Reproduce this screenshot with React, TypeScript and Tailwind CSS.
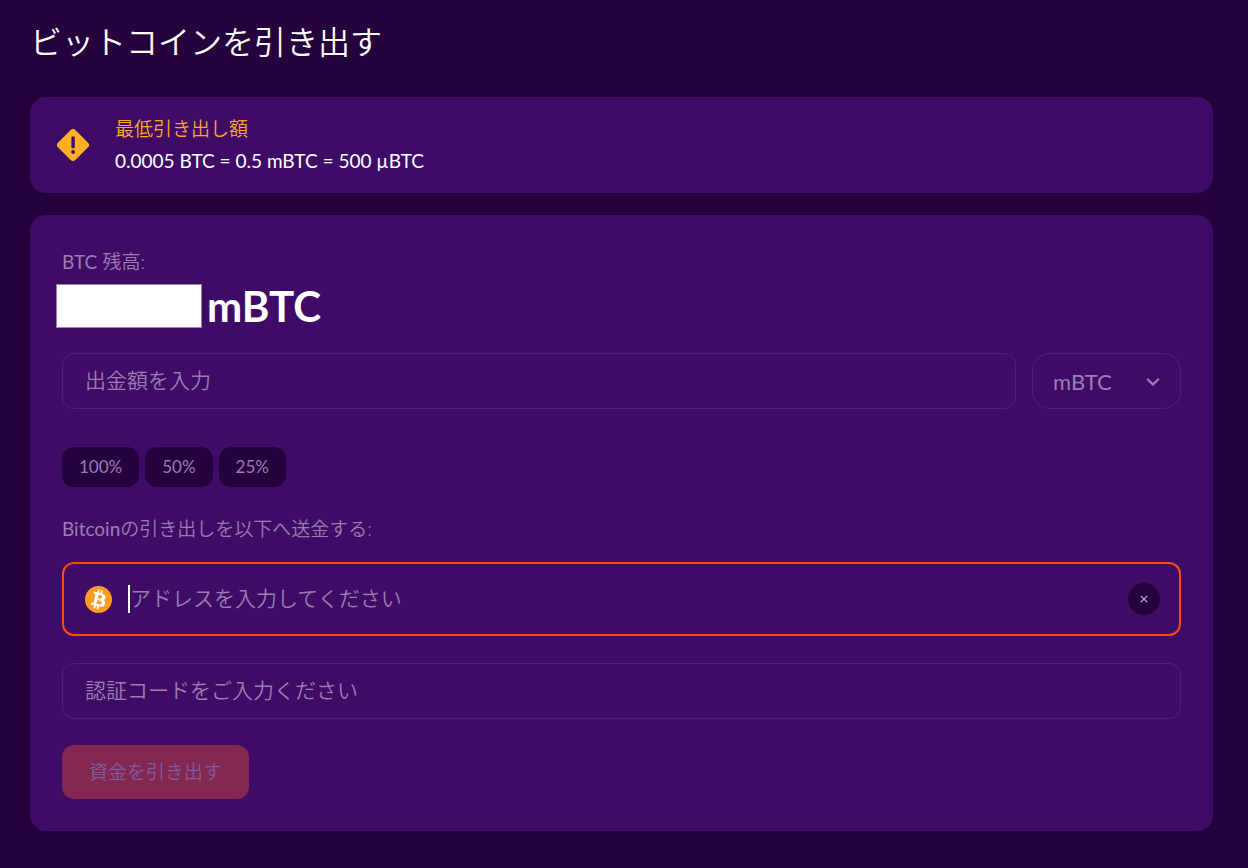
import { useState } from "react";

const percentages = ["100%", "50%", "25%"];

function WarningIcon() {
  return (
    <svg className="size-8 shrink-0" viewBox="0 0 32 32" aria-hidden="true">
      <path
        fill="#ffb020"
        d="M13.7 1a3.2 3.2 0 0 1 4.6 0L31 13.7a3.2 3.2 0 0 1 0 4.6L18.3 31a3.2 3.2 0 0 1-4.6 0L1 18.3a3.2 3.2 0 0 1 0-4.6Z"
      />
      <rect x="14.4" y="7.5" width="3.4" height="11.8" rx="1.2" fill="#3e0c66" />
      <circle cx="16.1" cy="23" r="1.9" fill="#3e0c66" />
    </svg>
  );
}

function BitcoinIcon() {
  return (
    <svg className="size-[27px] shrink-0" viewBox="0 0 32 32" aria-hidden="true">
      <circle cx="16" cy="16" r="16" fill="#ff9b21" />
      <path
        fill="#fff"
        transform="translate(-2.9 -2.9) scale(1.18)"
        d="M23.189 14.02c.314-2.096-1.283-3.223-3.465-3.975l.708-2.84-1.728-.43-.69 2.765c-.454-.114-.92-.22-1.385-.326l.695-2.783L15.596 6l-.708 2.839c-.376-.086-.746-.17-1.104-.26l.002-.009-2.384-.595-.46 1.846s1.283.294 1.256.312c.7.175.826.638.805 1.006l-.806 3.235c.048.012.11.03.18.057l-.183-.045-1.13 4.532c-.086.212-.303.531-.793.41.018.025-1.256-.313-1.256-.313l-.858 1.978 2.25.561c.418.105.828.215 1.231.318l-.715 2.872 1.727.43.708-2.84c.472.127.93.245 1.378.357l-.706 2.828 1.728.43.715-2.866c2.948.558 5.164.333 6.097-2.333.752-2.146-.037-3.385-1.588-4.192 1.13-.26 1.98-1.003 2.207-2.538zm-3.95 5.538c-.533 2.147-4.148.986-5.32.695l.95-3.805c1.172.293 4.929.872 4.37 3.11zm.535-5.569c-.487 1.953-3.495.96-4.47.717l.86-3.45c.975.243 4.118.696 3.61 2.733z"
      />
    </svg>
  );
}

export default function App() {
  const [amount, setAmount] = useState("");
  const [address, setAddress] = useState("");
  const [code, setCode] = useState("");

  return (
    <main className="min-h-screen bg-[#25023d] pt-4 pr-[35px] pb-9 pl-[30px] font-['Lato','Noto_Sans_CJK_JP',sans-serif] text-white">
      <h1 className="text-[32px] leading-[52px] font-[350]">ビットコインを引き出す</h1>

      <section className="mt-[29px] flex h-24 items-center gap-[26px] rounded-2xl bg-[#3e0c66] px-[27px]">
        <WarningIcon />
        <div className="text-[19px] leading-8">
          <h2 className="font-[350] text-[#ffa723]">最低引き出し額</h2>
          <p>0.0005 BTC = 0.5 mBTC = 500 µBTC</p>
        </div>
      </section>

      <form
        className="mt-[22px] rounded-2xl bg-[#3e0c66] p-8 text-[#9d7cb3]"
        onSubmit={(event) => event.preventDefault()}
      >
        <p className="text-[19px] leading-[30px] font-[350]">
          <span className="font-normal">BTC</span> 残高:
        </p>
        <div className="-ml-1.5 mt-[7px] flex h-11 items-center gap-[5px] text-[42px] font-bold text-white">
          <span className="h-11 w-[146px] border border-[#9d7cb3] bg-white" />
          <span>mBTC</span>
        </div>

        <div className="mt-[25px] flex gap-4">
          <input
            aria-label="出金額を入力"
            placeholder="出金額を入力"
            value={amount}
            onChange={(event) => setAmount(event.target.value)}
            className="h-14 min-w-0 flex-1 rounded-xl border border-[#531d80] bg-transparent px-[22px] pb-1 text-[21px] font-[350] outline-none placeholder:text-[#9d7cb3]"
          />
          <div className="relative w-[149px]">
            <select
              aria-label="mBTC"
              className="h-14 w-full appearance-none rounded-[18px] border border-[#531d80] bg-transparent px-5 text-[22px] outline-none"
            >
              <option>mBTC</option>
            </select>
            <svg
              className="pointer-events-none absolute top-6 right-[21px] h-2.5 w-3.5"
              viewBox="0 0 14 10"
              fill="none"
              stroke="currentColor"
              strokeWidth="2.2"
              aria-hidden="true"
            >
              <path d="m1.2 1.8 5.8 5.8 5.8-5.8" />
            </svg>
          </div>
        </div>

        <div className="mt-[38px] flex gap-1.5">
          {percentages.map((label) => (
            <button
              key={label}
              type="button"
              className="h-10 rounded-xl bg-[#25023d] px-[17px] text-[17px]"
            >
              {label}
            </button>
          ))}
        </div>

        <label htmlFor="address" className="mt-[27px] block text-[19px] leading-[30px] font-[350]">
          <span className="font-normal">Bitcoin</span>の引き出しを以下へ送金する:
        </label>
        <div className="mt-[18px] flex h-[74px] items-center rounded-xl border-2 border-[#ff4d12] pr-[19px] pl-[21px]">
          <BitcoinIcon />
          <span className="ml-4 h-7 w-0.5 bg-white" />
          <input
            id="address"
            placeholder="アドレスを入力してください"
            value={address}
            onChange={(event) => setAddress(event.target.value)}
            className="h-full min-w-0 flex-1 bg-transparent pb-1 text-[21px] font-[350] outline-none placeholder:text-[#9d7cb3]"
          />
          <button
            type="button"
            aria-label="クリア"
            onClick={() => setAddress("")}
            className="grid size-8 place-items-center rounded-full bg-[#25023d] text-[#c9b3d8]"
          >
            <svg className="size-2" viewBox="0 0 8 8" stroke="currentColor" strokeWidth="1.1" aria-hidden="true">
              <path d="m.8.8 6.4 6.4M7.2.8.8 7.2" />
            </svg>
          </button>
        </div>

        <input
          aria-label="認証コードをご入力ください"
          placeholder="認証コードをご入力ください"
          value={code}
          onChange={(event) => setCode(event.target.value)}
          className="mt-[27px] block h-14 w-full rounded-xl border border-[#531d80] bg-transparent px-[22px] pb-1 text-[21px] font-[350] outline-none placeholder:text-[#9d7cb3]"
        />

        <button
          type="submit"
          className="mt-[26px] block h-[54px] rounded-xl bg-[#832750] px-[27px] text-[19px] font-[350] text-[#7d5c9f]"
        >
          資金を引き出す
        </button>
      </form>
    </main>
  );
}
